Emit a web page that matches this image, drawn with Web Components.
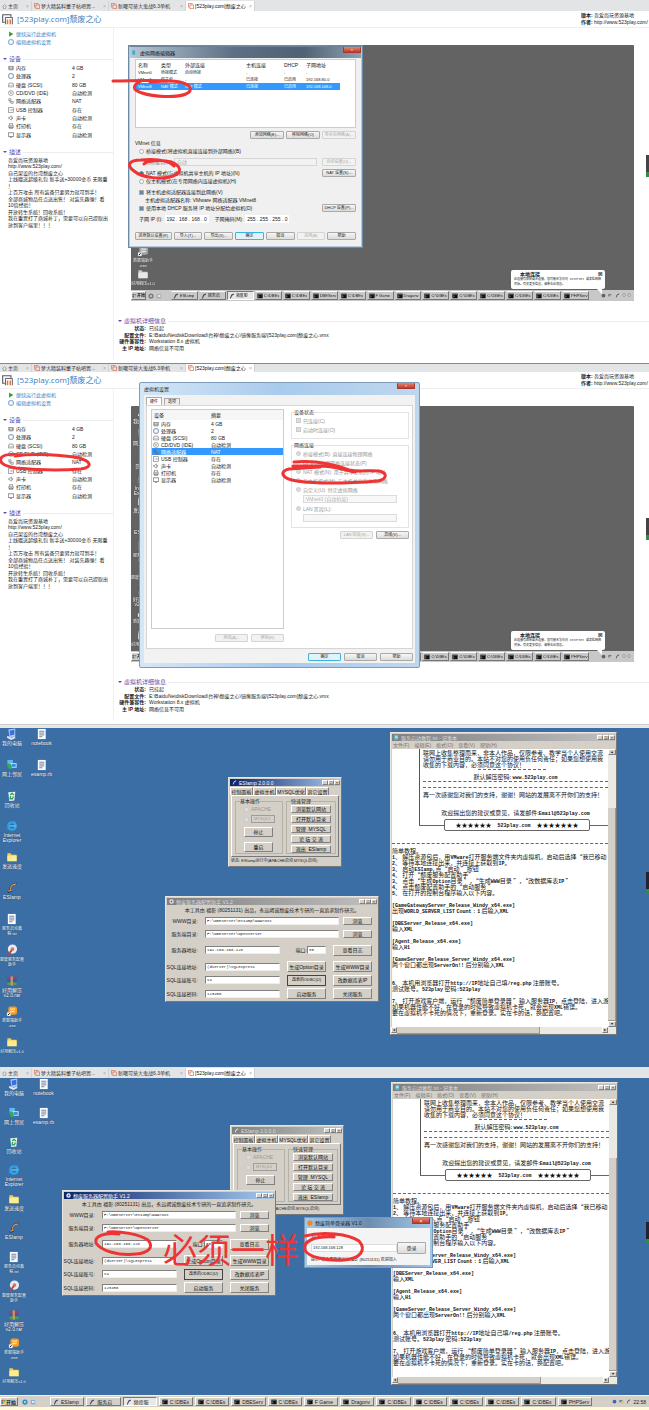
<!DOCTYPE html>
<html lang="zh-CN">
<head>
<meta charset="utf-8">
<title>[523play.com]颓废之心</title>
<style>
  body { margin: 0; background: #fff; font: 5px/6px "Liberation Sans", "Noto Sans CJK SC", sans-serif; color: #222; }
  vm-console + vm-console { margin-top: 3px; }
  net-dialog { left: 128px; top: 45px; }
  settings-dialog { left: 139px; top: 19px; }
  .first es-window { left: 228px; top: 49px; }
  .first config-window { left: 165px; top: 168px; }
  .first notepad-window { left: 390px; top: 4px; }
  .second es-window { left: 230px; top: 47px; }
  .second config-window { left: 62px; top: 112px; }
  .second notepad-window { left: 391px; top: 4px; }
  .second login-window { left: 304px; top: 139px; }
</style>
</head>
<body>
<vm-console tabs="tall"><net-dialog></net-dialog><red-ink kind="net"></red-ink></vm-console>
<vm-console tabs="short" status><settings-dialog></settings-dialog><red-ink kind="settings"></red-ink></vm-console>
<xp-desktop class="first">
  <es-window active></es-window><config-window></config-window><notepad-window></notepad-window>
</xp-desktop>
<vm-tabs tabs="tall"></vm-tabs>
<xp-desktop class="second" compact>
  <es-window></es-window><notepad-window></notepad-window><config-window active></config-window><login-window></login-window>
  <red-ink kind="same">必须一样</red-ink>
</xp-desktop>
<xp-taskbar></xp-taskbar>

<script>
const BASE = `
  :host, *, *::before, *::after { box-sizing: border-box; }
  :host([hidden]) { display: none; }
  button, input, select { font: inherit; color: inherit; margin: 0; padding: 0; min-width: 0; border-radius: 0; }
  button { white-space: nowrap; overflow: hidden; text-align: center; }
  input[type=text] { border: 1px solid #ddd; background: #fff; height: 8px; padding: 0 1px; }
  select { appearance: none; border: 1px solid #ccc; background: #f4f4f4; height: 8px; padding: 0 2px; }
  input[type=radio], input[type=checkbox] { appearance: none; width: 5px; height: 5px; border: 1px solid #aaa; background: #fff; flex: none; margin-right: 2px; }
  input[type=radio] { border-radius: 50%; }
  input[type=radio]:checked { background: #2d6ca2; border-color: #88a; }
  input[type=checkbox]:checked { background: #5b87b8; }
  input:disabled, input:disabled:checked { background: #ddd; border-color: #ccc; }
  label { display: flex; align-items: center; white-space: nowrap; }
  h1, h2, p { margin: 0; font-weight: normal; font-size: inherit; }
  table { border-collapse: collapse; border-spacing: 0; }
  td, th { padding: 0; text-align: left; font-weight: normal; white-space: nowrap; }
  a { color: inherit; text-decoration: none; }
  svg { display: block; flex: none; }
`;
const WIN7 = `
  button { height: 8px; border: 1px solid #aaa; border-radius: 1px; background: linear-gradient(#f6f6f6, #dcdcdc); line-height: 6px; }
  button:disabled { color: #aaa; border-color: #d4d4d4; background: #f2f2f2; }
  button.default { border-color: #3cb4e0; background: #e2f2fa; }
  .close { width: 18px; height: 6px; border: 1px solid #a33; border-top: 0; background: linear-gradient(#dc8a78, #c43a24); color: #fff; line-height: 4px; }
  .row { display: flex; align-items: center; height: 8px; }
  .off { color: #888; }
`;
const CLASSIC = `
  :host { position: absolute; display: flex; flex-direction: column; background: #d4d0c8; border: 1px solid; border-color: #e8e5df #777 #777 #e8e5df; }
  .title { display: flex; flex: none; align-items: center; height: 7px; margin: 1px; padding-left: 2px; gap: 2px; color: #ddd; background: linear-gradient(90deg, #808080, #c0c0c0); white-space: nowrap; }
  :host([active]) .title { color: #fff; background: linear-gradient(90deg, #0a246a, #a6caf0); }
  .title .space { flex: 1; }
  .title svg { width: 5px; height: 5px; }
  .caps { display: flex; }
  .caps button { width: 6px; height: 5px; line-height: 3px; font-size: 4px; color: #000; }
  button { background: #d4d0c8; border: 1px solid; border-color: #fff #808080 #808080 #fff; line-height: 6px; color: #111; }
  input[type=text] { border: 1px solid; border-color: #808080 #eee #eee #808080; height: 8px; font: 4px/6px "Liberation Mono", "Noto Sans CJK SC", monospace; }
`;
const CAPS = `<div class="caps"><button aria-label="最小化">_</button><button aria-label="最大化">□</button><button aria-label="关闭">×</button></div>`;
const svg = (body, w = 8, box = 16) => `<svg width="${w}" height="${w}" viewBox="0 0 ${box} ${box}" fill="none" aria-hidden="true">${body}</svg>`;
const dev = {
  mem: '<path d="M1 4h14v7H1zM4 4v7M8 4v7M12 4v7M2 13h12" stroke="#666" stroke-width="1.5"/>',
  cpu: '<rect x="2" y="2" width="12" height="12" rx="3" stroke="#4a6f96" stroke-width="2"/>',
  disk: '<path d="M3 3h10l2 6v4H1V9z" stroke="#666" stroke-width="1.5"/><path d="M1 9h14" stroke="#666"/>',
  cd: '<circle cx="8" cy="8" r="6.5" stroke="#666" stroke-width="1.5"/><circle cx="8" cy="8" r="2" stroke="#666"/><path d="m3 3 4 4" stroke="#666"/>',
  net: '<path d="M2 2h6v5H2zM8 9h6v5H8zM5 7v4h3" stroke="#666" stroke-width="1.5"/>',
  usb: '<rect x="1" y="2" width="14" height="12" stroke="#666" stroke-width="1.5"/><path d="M4 8h8M9 5l3 3-3 3" stroke="#666"/>',
  snd: '<path d="M2 6h3l4-4v12l-4-4H2zM12 5v6" stroke="#666" stroke-width="1.5"/>',
  prn: '<path d="M4 6V1h8v5M2 6h12v6H2zM4 10h8v5H4z" stroke="#666" stroke-width="1.5"/>',
  mon: '<path d="M1 2h14v10H1zM5 15h6" stroke="#555" stroke-width="1.7"/>'
};
const DEVICES = [['mem','内存','4 GB'],['cpu','处理器','2'],['disk','硬盘 (SCSI)','80 GB'],['cd','CD/DVD (IDE)','自动检测'],['net','网络适配器','NAT'],['usb','USB 控制器','存在'],['snd','声卡','自动检测'],['prn','打印机','存在'],['mon','显示器','自动检测']];
const vmIcon = '<path d="M4 12H1V1h12v3" stroke="#556" stroke-width="1.6"/><path d="M5 15V5h10v10" stroke="#556" stroke-width="1.4"/><path d="M8 15V8M12 15V8" stroke="#e8743a" stroke-width="2.2"/>';

function define(name, css, html) {
  customElements.define(name, class extends HTMLElement {
    constructor() {
      super();
      this.attachShadow({ mode: 'open' });
    }
    connectedCallback() {
      this.shadowRoot.innerHTML = `<style>${BASE}${css}</style>` + (typeof html === 'function' ? html(this) : html);
    }
  });
}

define('vm-tabs', `
  :host { display: flex; flex: none; height: 11px; background: #e3e4e6; color: #333; padding-top: 1px; }
  :host([tabs=short]) { height: 9px; border-top: 1px solid #888; padding-top: 0; }
  a { display: flex; align-items: center; gap: 1px; padding: 0 2px; border-right: 1px solid #d2d3d5; white-space: nowrap; }
  a span { flex: 1; }
  a i { color: #aaa; font-style: normal; }
  a:nth-of-type(1) { width: 32px; } a:nth-of-type(2) { width: 77px; } a:nth-of-type(3) { width: 77px; }
  a.on { width: 69px; background: #fff; color: #111; }
`, () => {
  const vm = svg('<path d="M1 12V1h11M5 15V5h10v10z" stroke="#d66a50" stroke-width="2"/>', 6);
  return `<a href="#">${svg('<path d="M1 8l7-6 7 6M4 7v8h8V7" stroke="#777" stroke-width="1.6"/>', 5)}<span>主页</span><i>×</i></a>
  <a href="#">${vm}<span>梦大精装料董子帖吧置...</span><i>×</i></a>
  <a href="#">${vm}<span>新曙可莫大鬼战6.3单机</span><i>×</i></a>
  <a href="#" class="on">${vm}<span>[523play.com]颓废之心</span><i>×</i></a>`;
});

const desk = {
  pc: '<path d="M5 3l15-2v17l-12 3z" fill="#a9c9f5"/><path d="M8 6l10-2v10l-9 2z" fill="#356fe0"/><path d="M3 17l9 4 8-3v4l-9 4-9-5z" fill="#dfe3ee"/>',
  lan: '<path d="M3 2h12v10H3z" fill="#60b8ee"/><path d="M10 9h13v10H10z" fill="#bfe5fb"/><path d="M12 11h9v6h-9z" fill="#328adf"/><path d="M3 9l8 3 2 8-5 3-5-6z" fill="#35aa55"/>',
  bin: '<path d="M5 5l15-1-2 19-11 1z" fill="#edf5f2"/><path d="M9 11l4-4 4 4M16 14l-2 5H9l1-6" stroke="#38a35c" stroke-width="3"/>',
  ie: '<circle cx="13" cy="13" r="8" stroke="#31a7ea" stroke-width="5"/><path d="M7 13h15" stroke="#62c3f4" stroke-width="3"/><path d="M2 22C-1 16 13 2 22 3" stroke="#2d8dd3" stroke-width="2"/>',
  dir: '<path d="M3 5h7l2 3h11v14H3z" fill="#f4cd51"/><path d="M3 10h20v12H3z" fill="#ffec91"/>',
  es: '<path d="M4 22l7-3c-5-7 3-15 12-16" stroke="#333" stroke-width="4"/><path d="M5 20l6-2c-4-7 2-13 11-14" stroke="#d79b5b" stroke-width="2.5"/>',
  txt: '<path d="M4 2h17v22H4z" fill="#fff"/><path d="M7 7h11M7 11h11M7 15h11M7 19h7" stroke="#64749a" stroke-width="2"/>',
  cfg: '<circle cx="14" cy="11" r="10" fill="#eceaf0"/><circle cx="14" cy="11" r="4" fill="#c67979"/><path d="M3 23l8-11 3 3-9 10z" fill="#c44535"/>',
  rar: '<path d="M3 4h20v6H3z" fill="#a03a75"/><path d="M3 10h20v6H3z" fill="#395aa6"/><path d="M3 16h20v6H3z" fill="#4b9b56"/><path d="M10 3h5v20h-5z" fill="#c19a63"/>',
  gold: '<rect x="5" y="3" width="19" height="18" rx="5" fill="#f49b22"/><path d="M9 9h11M9 14h10" stroke="#ffe2a8" stroke-width="3"/><path d="M2 16h8v8H2z" fill="#eee"/><path d="M4 22l4-4" stroke="#111" stroke-width="2"/>'
};
define('desktop-icons', `
  :host { display: grid; grid-template-columns: 24px 35px; grid-template-rows: repeat(11, minmax(0, 1fr)); grid-auto-flow: column; color: #fff; }
  .item { display: flex; flex-direction: column; align-items: center; text-align: center; gap: 1px; white-space: pre; line-height: 5px; text-shadow: 0 0 1px #123; }
  .long { font-size: 4px; }
`, (el) => [['pc','我的电脑'],['lan','网上邻居'],['bin','回收站'],['ie','Internet\nExplorer'],['dir','发送速度'],['es','ESIamp'],['txt','服务启动教\n程.txt',1],['cfg','颓废服务配置\n助手',1],['rar','好用解压\nv2.0.rar'],['gold','新颓端助手\n.exe',1],['dir','好用解压v1.0',1],['txt','notebook'],['txt','esamp.rb']]
  .slice(0, el.hasAttribute('single') ? 11 : 13)
  .map(([k, t, long]) => `<div class="item${long ? ' long' : ''}">${svg(desk[k], 12, 26)}<span>${t}</span></div>`).join(''));

const TASKS = ['ESIamp','服务启','频度服','C:\\DBEs','C:\\DBEs','DBEServ','C:\\DBEs','F Game','Dragonv','C:\\DBEs','C:\\DBEs','C:\\DBEs','C:\\DBEs','C:\\DBEs','PHPServ'];
const cmd = '<path d="M1 2h14v12H1z" fill="#111"/><path d="M1 2h14v3H1z" fill="#456"/><path d="M3 7l3 2-3 2" stroke="#fff"/>';
const taskbarHtml = (clock) => `<button class="start">${svg('<path d="M1 3l6-1v6H1z" fill="#d54b31"/><path d="M8 2l6 1v5H8z" fill="#4a9e3f"/><path d="M1 9h6v6l-6-1z" fill="#3673c8"/><path d="M8 9h6v5l-6 1z" fill="#e7b834"/>', 5)}开始</button>
  <div class="quick">${svg('<circle cx="8" cy="8" r="5" stroke="#268fd0" stroke-width="4"/>', 6)}${svg('<path d="M2 3h12v11H2z" fill="#77aee0"/><path d="M5 6h7v4H5z" fill="#fff"/>', 6)}</div>
  <div class="tasks">${TASKS.map((t, i) => `<button class="${i === 2 ? 'on' : ''}">${svg(i > 2 ? cmd : '<path d="M3 14c4-1-1-9 10-11" stroke="#347" stroke-width="3"/>', 6)}<span>${t}</span></button>`).join('')}</div>
  <div class="tray">${svg('<circle cx="8" cy="8" r="6" fill="#3866b8"/>', 5)}${svg('<path d="M1 3h10v8H1z" fill="#77a"/><path d="M6 7h9v7H6z" fill="#dc4"/>', 5)}${svg('<path d="M3 14c4-1-1-9 10-11" stroke="#444" stroke-width="3"/>', 5)}<span>${clock}</span></div>`;
const BAR = `
  button { display: flex; align-items: center; background: #d4d0c8; border: 1px solid; border-color: #fff #777 #777 #fff; gap: 2px; height: 9px; color: #222; }
  .start { width: 18px; font-weight: bold; flex: none; gap: 0; }
  .quick { display: flex; gap: 2px; width: 32px; padding-left: 4px; flex: none; }
  .tasks { display: flex; gap: 2px; flex: 1; min-width: 0; }
  .tasks button { flex: 1; padding-left: 2px; }
  .tasks .on { background: #eae8e2; border-color: #777 #fff #fff #777; }
  .tray { display: flex; gap: 2px; align-items: center; justify-content: flex-end; flex: none; }
`;
define('xp-taskbar', BAR + `
  :host { display: flex; align-items: center; height: 15px; background: #d4d0c8; border-top: 1px solid #f3f1ec; border-bottom: 3px solid #fdfbd8; }
  .tray { width: 57px; padding-right: 3px; }
`, taskbarHtml('22:58'));
define('mini-taskbar', BAR + `
  :host { display: flex; flex: none; align-items: center; height: 11px; background: #c8c8c8; filter: grayscale(1); font-size: 4px; }
  .start { width: 15px; } .quick { width: 25px; padding-left: 2px; }
  .tasks { gap: 1px; } .tasks button { background: #c8c8c8; border-left-color: #c8c8c8; gap: 1px; padding-left: 1px; }
  .tray { width: 45px; padding-right: 3px; }
`, taskbarHtml('◇ ◇'));

define('vm-console', `
  :host { display: flex; flex-direction: column; position: relative; background: #fff; overflow: hidden; }
  header { display: flex; flex: none; height: 17px; align-items: center; border-bottom: 1px solid #efefef; padding-left: 2px; gap: 4px; }
  h1 { font: 8px/12px "Open Sans", "Noto Sans CJK SC", sans-serif; color: #3a7cc0; flex: 1; }
  dl { display: grid; grid-template-columns: 13px 55px; margin: 0; line-height: 7px; white-space: nowrap; }
  dt { font-weight: bold; } dd { margin: 0; }
  .cols { display: flex; flex: 1; }
  aside { width: 114px; flex: none; border-right: 1px solid #f1f1f1; padding: 2px 0 0 8px; }
  aside > a { display: flex; align-items: center; gap: 2px; height: 8px; color: #3c7fc6; }
  h2 { color: #5b4db0; font-size: 6px; line-height: 8px; display: flex; align-items: center; gap: 2px; }
  h2::before { content: ""; border: 2px solid transparent; border-top-color: #5b4db0; border-bottom: 0; }
  h2::after { content: ""; flex: 1; height: 1px; background: #ececec; }
  aside h2 { margin: 9px 0 1px -5px; }
  aside table { width: 100%; height: 75px; }
  aside td:first-child { width: 8px; } aside td:nth-child(2) { width: 56px; }
  .notes { display: grid; grid-auto-rows: 1fr; height: 71px; white-space: nowrap; }
  main { flex: 1; min-width: 0; }
  .preview { position: relative; margin: 17px 15px 0 17px; height: 256px; background: #636363; display: flex; flex-direction: column; border-radius: 1px; overflow: hidden; }
  .preview desktop-icons { flex: 1; min-height: 0; grid-template-columns: 24px; filter: grayscale(1); }
  .balloon { position: absolute; right: 29px; bottom: 12px; width: 94px; height: 19px; background: #fff; border-radius: 2px; padding: 1px 3px; }
  .balloon b { display: flex; justify-content: space-between; padding-left: 6px; }
  .balloon p { font: 3px/5px "Liberation Mono", "Noto Sans CJK SC", monospace; }
  .balloon::after { content: ""; position: absolute; right: 3px; top: 19px; border: 5px solid transparent; border-top-color: #fff; border-right: 0; border-bottom: 0; }
  .details { padding: 16px 0 9px; }
  .details h2 { margin-left: 4px; }
  .details table { height: 26px; }
  .details th { width: 35px; padding-right: 3px; text-align: right; font-weight: bold; }
  footer { height: 4px; flex: none; margin-top: 3px; background: #e9e9e9; border-top: 1px solid #ccc; }
  .edge { position: absolute; right: 0; top: 155px; width: 3px; height: 22px; background: #444; border-bottom: 5px solid #2e8b4a; }
`, (el) => `<vm-tabs tabs="${el.getAttribute('tabs')}"></vm-tabs>
  <header>${svg(vmIcon, 11)}<h1>[523play.com]颓废之心</h1>
    <dl><dt>版本:</dt><dd>吾爱尚玩资源基地</dd><dt>作者:</dt><dd>http://www.523play.com/</dd></dl></header>
  <div class="cols"><aside>
    <a href="#">${svg('<path d="M3 1l11 7-11 7z" fill="#35a022"/>', 6)}继续运行此虚拟机</a>
    <a href="#">${svg('<rect x="2" y="2" width="12" height="12" rx="3" stroke="#3c7fc6" stroke-width="2"/>', 6)}编辑虚拟机设置</a>
    <h2>设备</h2>
    <table>${DEVICES.map(([k, n, v]) => `<tr><td>${svg(dev[k], 6)}</td><td>${n}</td><td>${v}</td></tr>`).join('')}</table>
    <h2>描述</h2>
    <div class="notes">${['吾爱尚玩资源基地', 'http://www.523play.com/', '自己架设的台湾颓废之心', '上线赠送超级礼包 新手送+30000金币 无限重', '！', '上百万攻击 所有装备只要努力就可到手！', '全部商城物品任点送出售！ 对装先趣弹！看', '10倍经验！', '开放转生系统！回收系统！', '我在重置打了商城补丁，需要可以自己提取出', '放到客户端里！！！'].map(t => `<p>${t}</p>`).join('')}</div>
  </aside><main>
    <div class="preview"><desktop-icons single></desktop-icons><mini-taskbar></mini-taskbar>
      <div class="balloon"><b>本地连接<span>☒</span></b><p>此连接有限制或无连接，您可能无法访问 Internet 或某些网络资源。有关更多信息，请单击此消息。</p></div></div>
    <section class="details"><h2>虚拟机详细信息</h2>
      <table><tr><th>状态:</th><td>已挂起</td></tr><tr><th>配置文件:</th><td>E:\\BaiduNetdiskDownload\\台神\\颓废之心\\镜像服务端\\[523play.com]颓废之心.vmx</td></tr><tr><th>硬件兼容性:</th><td>Workstation 8.x 虚拟机</td></tr><tr><th>主 IP 地址:</th><td>网络信息不可用</td></tr></table></section>
  </main></div>
  ${el.hasAttribute('status') ? '<footer></footer>' : ''}
  <div class="edge"></div><slot></slot>`);

define('net-dialog', WIN7 + `
  :host { position: absolute; display: flex; flex-direction: column; width: 235px; height: 203px; border: 2px solid #b4cbe2; border-top-color: #6d8296; outline: 1px solid #6b8aa8; outline-offset: -1px; background: #f0f0f0; padding: 0 5px; }
  button { font-size: 4px; }
  .title { display: flex; justify-content: space-between; align-items: center; height: 11px; flex: none; margin: 0 -5px; padding: 0 0 0 2px; background: linear-gradient(90deg, #b6c7d6, #5c6f84 45%, #4f6274 75%, #8da0b0); color: #111; }
  .title span { display: flex; gap: 3px; } .title .close { align-self: flex-start; }
  .list { height: 69px; flex: none; background: #fff; border: 1px solid #ccc; margin-top: 1px; }
  .list table { table-layout: fixed; width: 204px; }
  .list tr { height: 7px; line-height: 6px; } .list thead tr { height: 9px; }
  .list tr.sel { background: #3399ff; color: #fff; }
  .list th:nth-child(1) { width: 23px; } .list th:nth-child(2) { width: 24px; } .list th:nth-child(3) { width: 61px; } .list th:nth-child(4) { width: 38px; } .list th:nth-child(5) { width: 22px; }
  td, th { padding-left: 2px; }
  .list tbody { font-size: 4px; }
  .right { justify-content: flex-end; gap: 2px; }
  .right button { width: 38px; }
  .row { flex: none; } .row > button { width: 34px; }
  .row label { flex: 1; }
  select { width: 143px; margin-right: 5px; }
  .ip { gap: 2px; } .ip label { flex: none; } .ip input { width: 44px; border: 0; text-align: center; }
  .foot { gap: 2px; margin-top: 9px; justify-content: space-between; } .foot button { width: 29px; } .foot button:first-child { width: 37px; }
  .gap { margin-top: 3px; } .in { padding-left: 4px; } .in2 { padding-left: 10px; }
`, `<div class="title"><span>${svg('<path d="M1 1h9v14H1z" fill="#48a8d0"/>', 5)}虚拟网络编辑器</span><button class="close" aria-label="关闭">×</button></div>
  <div class="list"><table><thead><tr><th>名称</th><th>类型</th><th>外部连接</th><th>主机连接</th><th>DHCP</th><th>子网地址</th></tr></thead>
  <tbody><tr><td>VMnet0</td><td>桥接模式</td><td>自动桥接</td><td>-</td><td>-</td><td>-</td></tr><tr><td>VMnet1</td><td>仅主机...</td><td>-</td><td>已连接</td><td>已启用</td><td>192.168.80.0</td></tr><tr class="sel"><td>VMnet8</td><td>NAT 模式</td><td>NAT 模式</td><td>已连接</td><td>已启用</td><td>192.168.168.0</td></tr></tbody></table></div>
  <div class="row right gap"><button>添加网络(E)...</button><button>移除网络(O)</button><button disabled>重命名网络(A)...</button></div>
  <div class="row">VMnet 信息</div>
  <div class="row in"><label><input type="radio" name="m">桥接模式(将虚拟机直接连接到外部网络)(B)</label></div>
  <div class="row off gap in2"><label for="br">已桥接到(G):</label><select id="br" disabled><option>自动</option></select><button disabled>自动设置(U)...</button></div>
  <div class="row gap in"><label><input type="radio" name="m" checked>NAT 模式(与虚拟机共享主机的 IP 地址)(N)</label><button>NAT 设置(S)...</button></div>
  <div class="row in"><label><input type="radio" name="m">仅主机模式(在专用网络内连接虚拟机)(H)</label></div>
  <div class="row gap in"><label><input type="checkbox" checked>将主机虚拟适配器连接到此网络(V)</label></div>
  <div class="row in2">主机虚拟适配器名称: VMware 网络适配器 VMnet8</div>
  <div class="row in"><label><input type="checkbox" checked>使用本地 DHCP 服务将 IP 地址分配给虚拟机(D)</label><button>DHCP 设置(P)...</button></div>
  <div class="row ip gap in"><label for="ip">子网 IP (I):</label><input id="ip" type="text" value="192 . 168 . 168 . 0"><span></span><span></span><label for="mask">子网掩码(M):</label><input id="mask" type="text" value="255 . 255 . 255 . 0"></div>
  <div class="row foot"><button>还原默认设置(R)</button><button>导入(T)...</button><button>导出(X)...</button><button class="default">确定</button><button>取消</button><button disabled>应用(A)</button><button>帮助</button></div>`);

define('settings-dialog', WIN7 + `
  :host { position: absolute; display: flex; flex-direction: column; width: 281px; height: 286px; border: 1px solid #7d9cbc; background: linear-gradient(90deg, #d5e6f7, #a8cbed 50%, #bed7ee); padding: 0 4px 4px; border-radius: 2px; }
  button { font-size: 4px; }
  .title { display: flex; flex: none; justify-content: space-between; height: 12px; line-height: 12px; }
  .body { flex: 1; background: #f2f2f2; display: flex; flex-direction: column; padding: 2px; min-height: 0; }
  nav { display: flex; flex: none; height: 8px; align-items: end; gap: 2px; } nav button { width: 16px; height: 7px; background: #eee; border-bottom: 0; } nav .on { background: #fff; height: 8px; }
  .page { flex: 1; min-height: 0; display: flex; gap: 7px; background: #fff; border: 1px solid #d5d5d5; padding: 3px 3px 3px 4px; }
  .left { width: 133px; display: flex; flex-direction: column; gap: 3px; }
  .list { flex: 1; border: 1px solid #ccc; }
  .list table { width: 100%; } .list tr { height: 7px; line-height: 6px; } .list thead tr { height: 10px; background: #f6f6f6; }
  .list .sel { background: #3399ff; color: #fff; }
  .list td:first-child { width: 9px; padding-left: 1px; } .list td:nth-child(2) { width: 50px; } .list th:first-child { padding-left: 2px; }
  .right { flex: 1; min-width: 0; } .buttons { display: flex; flex: none; gap: 3px; justify-content: flex-end; } .buttons button { width: 33px; }
  .left .buttons { padding: 2px 0 3px; } .last { padding-top: 4px; }
  fieldset { border: 1px solid #e3e3e3; margin: 0 0 3px; padding: 0 0 0 4px; min-width: 0; color: #999; }
  legend { padding: 0; margin-left: -2px; color: #333; line-height: 7px; }
  .row { height: 9px; } .state { height: 30px; } .net { height: 86px; }
  .in { padding-left: 7px; } select { width: 94px; } .row:has(select) { height: 10px; }
`, `<div class="title"><span>虚拟机设置</span><button class="close" aria-label="关闭">×</button></div>
  <div class="body"><nav><button class="on">硬件</button><button>选项</button></nav>
  <div class="page"><div class="left"><div class="list"><table><thead><tr><th colspan="2">设备</th><th>摘要</th></tr></thead><tbody>${DEVICES.map(([k, n, v]) => `<tr class="${k === 'net' ? 'sel' : ''}"><td>${svg(dev[k], 6)}</td><td>${n}</td><td>${v}</td></tr>`).join('')}</tbody></table></div><div class="buttons"><button disabled>添加(A)...</button><button disabled>移除(R)</button></div></div>
  <div class="right"><fieldset class="state"><legend>设备状态</legend><div class="row"><label><input type="checkbox" disabled>已连接(C)</label></div><div class="row"><label><input type="checkbox" disabled checked>启动时连接(O)</label></div></fieldset>
  <fieldset class="net"><legend>网络连接</legend>
  <div class="row"><label><input type="radio" disabled>桥接模式(B): 直接连接物理网络</label></div><div class="row in"><label><input type="checkbox" disabled>复制物理网络连接状态(P)</label></div>
  <div class="row"><label><input type="radio" disabled checked>NAT 模式(N): 用于共享主机的 IP 地址</label></div><div class="row"><label><input type="radio" disabled>仅主机模式(H): 与主机共享的专用网络</label></div>
  <div class="row"><label><input type="radio" disabled>自定义(U): 特定虚拟网络</label></div><div class="row in"><select aria-label="特定虚拟网络" disabled><option>VMnet0 (自动桥接)</option></select></div>
  <div class="row"><label><input type="radio" disabled>LAN 区段(L):</label></div><div class="row in"><select aria-label="LAN 区段" disabled><option></option></select></div></fieldset>
  <div class="buttons"><button disabled>LAN 区段(S)...</button><button>高级(V)...</button></div></div></div>
  <div class="buttons last"><button class="default">确定</button><button>取消</button><button>帮助</button></div></div>`);

define('xp-desktop', `
  :host { display: block; position: relative; height: 339px; background: #3a6ea5; overflow: hidden; }
  :host([compact]) { height: 317px; }
  desktop-icons { height: 100%; }
  :host([compact]) desktop-icons { padding-left: 2px; }
  .edge { position: absolute; right: 0; top: 144px; width: 3px; height: 22px; background: #223; border-bottom: 5px solid #2e8b4a; }
`, `<desktop-icons></desktop-icons><div class="edge"></div><slot></slot>`);

define('es-window', CLASSIC + `
  :host { width: 114px; height: 90px; }
  nav { display: flex; height: 8px; padding-left: 1px; } nav button { border-bottom: 0; height: 8px; width: 23px; } nav button:nth-child(3) { width: 30px; }
  .page { flex: 1; display: flex; gap: 3px; margin: 0 2px; padding: 2px 2px 2px 3px; border: 1px solid; border-color: #fff #777 #777 #fff; min-height: 0; }
  fieldset { margin: 0; padding: 0 4px; border: 1px solid #b5b1a9; min-width: 0; } legend { padding: 0; line-height: 7px; }
  .a { width: 48px; } .a label { height: 8px; margin: 0 0 2px 4px; color: #999; } .a button { display: block; width: 29px; height: 10px; margin: 4px 0 5px 4px; } .a select { width: 24px; color: #888; font-size: 4px; background: #d4d0c8; border-color: #888; }
  .b { flex: 1; } .b button { display: block; width: 100%; height: 8px; margin-bottom: 2px; white-space: pre; }
  footer { height: 9px; font-size: 4px; line-height: 8px; padding-left: 2px; white-space: nowrap; }
`, `<div class="title">${svg('<path d="M3 14c4-1-1-9 10-11" stroke="#fff" stroke-width="3"/>', 5)}<span>ESIamp 2.0.0.0</span><span class="space"></span>${CAPS}</div>
  <nav><button>控制面板</button><button>虚拟主机</button><button>MYSQL优化</button><button>其它设置</button></nav>
  <div class="page"><fieldset class="a"><legend>基本操作</legend><label><input type="checkbox" checked disabled>APACHE</label><label><input type="checkbox" checked disabled><select aria-label="服务" disabled><option>MYSQL5</option></select></label><button>停止</button><button>重启</button></fieldset>
  <fieldset class="b"><legend>快速管理</legend><button>浏览默认网站</button><button>打开默认目录</button><button>管理  MYSQL</button><button>论 坛 交 流</button><button>退出  ESIamp</button></fieldset></div>
  <footer>状态: ESIamp运行中(APACHE启动,MYSQL启动)</footer>`);

define('config-window', CLASSIC + `
  :host { width: 214px; height: 106px; }
  .note { text-align: center; line-height: 9px; flex: none; white-space: nowrap; }
  .grid { display: grid; grid-template-columns: 32px 75px 39px 39px; column-gap: 7px; padding: 0 4px 0 0; flex: 1; grid-template-rows: 12px 13px 20px 13px 14px 13px; align-items: center; }
  .grid > label { justify-content: flex-end; }
  .wide { grid-column: 2 / 4; width: 134px; } .small { justify-self: end; width: 29px; }
  .grid > button { height: 11px; } .grid > button.small { height: 8px; } .port { display: flex; justify-content: space-between; } .port input { width: 19px; }
  .dark { outline: 1px solid #444; outline-offset: -1px; font-size: 4px; }
`, `<div class="title">${svg('<circle cx="8" cy="8" r="7" fill="#eee"/><circle cx="8" cy="8" r="3" fill="#557"/>', 5)}<span>颓废服务器配置助手 V1.2</span><span class="space"></span>${CAPS}</div>
  <p class="note">本工具由 福影 (80251131) 出品，永远竭诚颓废技术专研的一直追求制作研究。</p>
  <div class="grid">
  <label for="w">WWW目录:</label><input id="w" class="wide" type="text" value="F:\\DBEServer\\ESIamp\\wwwroot"><button class="small">浏览</button>
  <label for="d">服务端目录:</label><input id="d" class="wide" type="text" value="F:\\DBEServer\\OpenServer"><button class="small">浏览</button>
  <label for="s">服务器地址:</label><input id="s" type="text" value="192.168.168.128"><label class="port">端口: <input type="text" value="80"></label><button>查看日志</button>
  <label for="a">SQL连接地址:</label><input id="a" type="text" value="(dserver)\\SQLExpress"><button>生成Option目录</button><button>生成WWW目录</button>
  <label for="u">SQL连接账号:</label><input id="u" type="text" value="sa"><button class="dark">改表的ODBC(U)</button><button>改数据库表IP</button>
  <label for="p">SQL连接密码:</label><input id="p" type="text" value="123456"><button>启动服务</button><button>关闭服务</button></div>`);

const NOTE_HEAD = ['联网上收集整理而来，非本人作品，仅限参考、教学当个人使用交流', '请勿用于商业目的。本站不对您的使用负任何责任；如果您想使用我', '收集的下载内容，必须同意这个协议！'];
const NOTE_BODY = ['简单教程。', '1、 解压资源包后，用VMware打开服务端文件夹内虚拟机，启动后选择“我已移动', '2、 等待本地连接出来，并连接上获取到IP。', '3、 启动ESIamp,点“启动 ”按钮', '4、 打开“颓废服务配置助手”', '3、 点击“生成Option目录 ”,“生成WWW目录 ”,“改数据库表IP ”', '4、 点击颓废配置助手的“启动服务 ”', '5、 在打开的控制台程序输入以下内容。', '', '[GameGatewayServer_Release_Windy_x64.exe]', '出现WORLD_SERVER_LIST Count : 1 后输入XML', '', '[DBEServer_Release_x64.exe]', '输入XML', '', '[Agent_Release_x64.exe]', '输入H1', '', '[GameServer_Release_Server_Windy_x64.exe]', '两个窗口都出现ServerOn!! 后分别输入XML', '', '', '6、 本机用浏览器打开http://IP地址自己填/reg.php 注册账号。', '测试账号。523play 密码:523play', '', '7、 打开游戏客户端，运行 “颓废简单登录器 ”输入服务器IP，点击登陆，进入游', '如果机器性能不好，在登录的时候导致虚拟机卡死，就会出现XML错误。', '要在虚拟机不卡死的情况下，重新登录。实在卡的话，换配置吧。'];
const mono = (t) => t.replace(/[\x21-\x7e]+/g, m => `<tt>${m}</tt>`);
define('notepad-window', CLASSIC + `
  :host { width: 227px; height: 303px; }
  .menu { display: flex; flex: none; gap: 5px; height: 7px; line-height: 7px; padding-left: 2px; color: #777; }
  .mid { flex: 1; display: flex; min-height: 0; margin-left: 1px; }
  .text { flex: 1; min-width: 0; overflow: hidden; background: #fff; color: #111; font: 6px/6px "Noto Sans CJK SC", sans-serif; }
  tt { font: bold 5px/6px "Liberation Mono", monospace; }
  p { height: 6px; white-space: pre; }
  .card { margin-left: 27px; border-left: 1px solid #555; padding-left: 3px; height: 76px; padding-top: 1px; }
  .card .c { text-align: center; }
  .dash { border-top: 1px dashed #666; height: 5px; margin-top: 1px; }
  .card .short { width: 68px; margin-left: 55px; }
  .sign { display: flex; align-items: center; margin-left: 27px; height: 12px; margin-top: -6px; margin-bottom: 12px; }
  .sign::before { content: ""; width: 25px; height: 1px; background: #666; } .sign::after { content: ""; flex: 1; height: 1px; background: #666; }
  .sign span { border: 1px solid #666; border-radius: 2px; width: 146px; height: 12px; text-align: center; line-height: 10px; white-space: nowrap; }
  .vbar { width: 8px; display: flex; flex-direction: column; background: #ebe9e4; }
  .vbar button, .hbar button { flex: none; height: 6px; font-size: 4px; line-height: 4px; }
  .vbar .track { flex: 1; } .vbar .thumb { flex: 4; background: #d4d0c8; border: 1px solid #999; border-width: 0 1px 1px 0; }
  .hbar { height: 7px; flex: none; display: flex; background: #ebe9e4; padding-right: 8px; } .hbar button { width: 6px; } .hbar div { width: 143px; background: #d4d0c8; border: 1px solid #999; border-width: 0 1px 1px 0; margin-right: auto; }
`, `<div class="title">${svg('<path d="M1 1h12v14H1z" fill="#5cc0e0"/><path d="M4 4h7M4 8h7" stroke="#fff" stroke-width="2"/>', 5)}<span>服务启动教程.txt - 记事本</span><span class="space"></span>${CAPS}</div>
  <div class="menu"><span>文件(F)</span><span>编辑(E)</span><span>格式(O)</span><span>查看(V)</span><span>帮助(H)</span></div>
  <div class="mid"><div class="text">
    <div class="card">${NOTE_HEAD.map(t => `<p>${t}</p>`).join('')}<div class="dash short"></div><p class="c">默认解压密码: <tt>www.523play.com</tt></p><div class="dash"></div><div class="dash"></div><p>再一次感谢您对我们的支持，谢谢！网站的发展离不开你们的支持！</p><p></p><p></p><p class="c">欢迎提出您的建议或意见，请发邮件:<tt>Email@523play.com</tt></p></div>
    <div class="sign"><span>★★★★★★　<tt>523play.com</tt>　★★★★★★★</span></div>
    <div class="dash"></div>${NOTE_BODY.map(t => `<p>${mono(t)}</p>`).join('')}</div>
  <div class="vbar"><button aria-label="上">▴</button><div class="track"></div><div class="thumb"></div><button aria-label="下">▾</button></div></div>
  <div class="hbar"><button aria-label="左">◂</button><div></div><button aria-label="右">▸</button></div>`);

define('login-window', WIN7 + `
  :host { position: absolute; display: flex; flex-direction: column; width: 129px; height: 51px; border: 1px solid #7898b8; background: linear-gradient(90deg, #a5c8e8, #6c8db0 50%, #a5c8e8); padding: 0 2px 2px; }
  .title { display: flex; flex: none; height: 10px; gap: 2px; align-items: center; } .title span { flex: 1; } .close { align-self: flex-start; }
  .body { flex: 1; background: #f4f4f4; padding: 4px 4px 2px; display: flex; flex-direction: column; justify-content: space-between; }
  .row { height: 12px; justify-content: space-between; } .row input { width: 87px; font-size: 4px; } .row button { width: 29px; height: 12px; } p { white-space: nowrap; font-size: 4px; }
`, `<div class="title">${svg('<circle cx="8" cy="8" r="7" fill="#ed8b21"/>', 6)}<span>颓废简单登录器 V1.0</span><button class="close" aria-label="关闭">×</button></div>
  <div class="body"><label for="ip">登录器地址:</label><div class="row"><input id="ip" type="text" value="192.168.168.128"><button>登录</button></div><p>提示: 请不要随便运行 福影 (80251131) 欢迎加入</p></div>`);

const INK = {
  net: '<path d="M113 81c17 0 35-1 54 0"/><path d="M141 81c-9 4-9 9 1 12 12 4 34 5 44 1 8-4 5-9-6-12-9-2-19-1-30 0"/><path d="M144 164c2-3 17-5 27-2 10 4 12 10 2 14-11 4-31 2-39-5-8-6-5-11 7-11 12-1 26-1 33 6"/>',
  settings: '<path d="M15 93c20-3 48-1 64 2 11 3 15 9 2 11-23 2-45 1-65-1-14-2-18-7-14-11 3-3 12-3 21-2"/><path d="M293 103h27c12 0 22 3 35 6M294 99c22-2 42 3 55 8 9 2 19 0 30 1 9 2 8 8-1 10-25 2-60 3-81 0-16-2-18-10-8-12l31-2"/>',
  same: '<path d="M108 154c12-1 31 2 40 8 6 7 1 13-12 14-17 2-35-3-40-11-2-7 9-11 23-9"/><path d="M305 158c18-5 44-2 54 5 8 9 1 18-15 19-18 1-36-3-39-10-3-9 10-14 29-13"/>'
};
define('red-ink', `
  :host { position: absolute; inset: 0; pointer-events: none; display: block; }
  svg { position: absolute; inset: 0; overflow: visible; }
  .word { position: absolute; left: 163px; top: 147px; font: 34px/48px "Noto Sans CJK SC", sans-serif; color: #ee3434; white-space: nowrap; }
`, (el) => `<svg width="1" height="1" fill="none" stroke="#ee3434" stroke-width="3" stroke-linecap="round" stroke-linejoin="round">${INK[el.getAttribute('kind')]}</svg><span class="word"><slot></slot></span>`);
</script>
</body>
</html>
